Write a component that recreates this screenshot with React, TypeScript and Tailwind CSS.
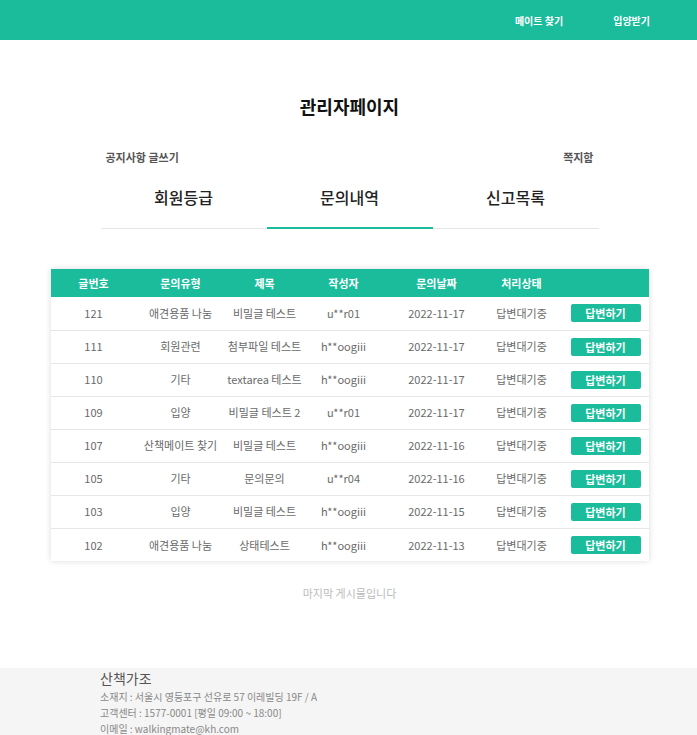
import React from "react";

const rows = [
    { no: 121, type: "애견용품 나눔", title: "비밀글 테스트", writer: "u**r01", date: "2022-11-17" },
    { no: 111, type: "회원관련", title: "첨부파일 테스트", writer: "h**oogiii", date: "2022-11-17" },
    { no: 110, type: "기타", title: "textarea 테스트", writer: "h**oogiii", date: "2022-11-17" },
    { no: 109, type: "입양", title: "비밀글 테스트 2", writer: "u**r01", date: "2022-11-17" },
    { no: 107, type: "산책메이트 찾기", title: "비밀글 테스트", writer: "h**oogiii", date: "2022-11-16" },
    { no: 105, type: "기타", title: "문의문의", writer: "u**r04", date: "2022-11-16" },
    { no: 103, type: "입양", title: "비밀글 테스트", writer: "h**oogiii", date: "2022-11-15" },
    { no: 102, type: "애견용품 나눔", title: "상태테스트", writer: "h**oogiii", date: "2022-11-13" },
];

export default function App() {
    return (
        <div className="min-h-[735px] bg-white font-['Noto_Sans_CJK_KR','Noto_Sans',sans-serif] text-[#333]">
            {/* header */}
            <header className="h-10 bg-[#1abc9c] flex items-center justify-end">
                <nav className="flex text-[10px] font-bold text-white">
                    <a className="mr-[50px]">메이트 찾기</a>
                    <a className="mr-[47px]">입양받기</a>
                </nav>
            </header>

            <main className="w-[600px] mx-auto pl-[2px]">
                <h1 className="mt-[54px] text-center text-[18px] leading-6 font-bold text-[#111]">관리자페이지</h1>

                <div className="mt-[31px] px-[55px] flex justify-between text-[11px] leading-4 font-semibold text-[#555]">
                    <a>공지사항 글쓰기</a>
                    <a>쪽지함</a>
                </div>

                <div className="mt-[20px] mx-[50px] flex border-b border-[#e5e5e5]">
                    <div className="flex-1 text-center text-[16px] leading-6 font-medium text-[#222] pb-[18px]">회원등급</div>
                    <div className="flex-1 text-center text-[16px] leading-6 font-medium text-[#222] pb-[18px] border-b-2 border-[#1abc9c] -mb-px">문의내역</div>
                    <div className="flex-1 text-center text-[16px] leading-6 font-medium text-[#222] pb-[18px]">신고목록</div>
                </div>

                <div className="mt-10 shadow-[0_0_6px_rgba(0,0,0,0.15)]">
                    <table className="w-full table-fixed text-[11px] text-center">
                        <colgroup>
                            <col className="w-[86px]" />
                            <col className="w-[88px]" />
                            <col className="w-[80px]" />
                            <col className="w-[78px]" />
                            <col className="w-[108px]" />
                            <col className="w-[62px]" />
                            <col />
                        </colgroup>
                        <thead className="bg-[#1abc9c] text-white">
                            <tr className="h-[28px]">
                                <th className="font-bold">글번호</th>
                                <th className="font-bold">문의유형</th>
                                <th className="font-bold">제목</th>
                                <th className="font-bold">작성자</th>
                                <th className="font-bold">문의날짜</th>
                                <th className="font-bold">처리상태</th>
                                <th></th>
                            </tr>
                        </thead>
                        <tbody className="text-[#6a6a6a]">
                            {rows.map((r, i) => (
                                <tr
                                    key={r.no}
                                    className={i < rows.length - 1 ? "h-[33px] border-b border-[#e6e6e6]" : "h-[33px]"}
                                >
                                    <td>{r.no}</td>
                                    <td>{r.type}</td>
                                    <td>{r.title}</td>
                                    <td>{r.writer}</td>
                                    <td>{r.date}</td>
                                    <td>답변대기중</td>
                                    <td>
                                        <div className="flex justify-end pr-2">
                                            <button className="w-[70px] h-[18px] bg-[#1abc9c] text-white text-[11px] font-bold rounded-[2px] leading-[18px]">
                                                답변하기
                                            </button>
                                        </div>
                                    </td>
                                </tr>
                            ))}
                        </tbody>
                    </table>
                </div>

                <p className="mt-[24px] text-center text-[11px] leading-4 text-[#bbb]">마지막 게시물입니다</p>
            </main>

            {/* footer */}
            <footer className="mt-[67px] bg-[#f5f5f5] pb-4">
                <div className="pl-[100px]">
                    <p className="text-[14px] leading-5 text-[#555]">산책가조</p>
                    <p className="mt-[1px] text-[10px] leading-4 text-[#888]">소재지 : 서울시 영등포구 선유로 57 이레빌딩 19F / A</p>
                    <p className="text-[10px] leading-4 text-[#888]">고객센터 : 1577-0001 [평일 09:00 ~ 18:00]</p>
                    <p className="text-[10px] leading-4 text-[#888]">이메일 : walkingmate@kh.com</p>
                </div>
            </footer>
        </div>
    );
}
